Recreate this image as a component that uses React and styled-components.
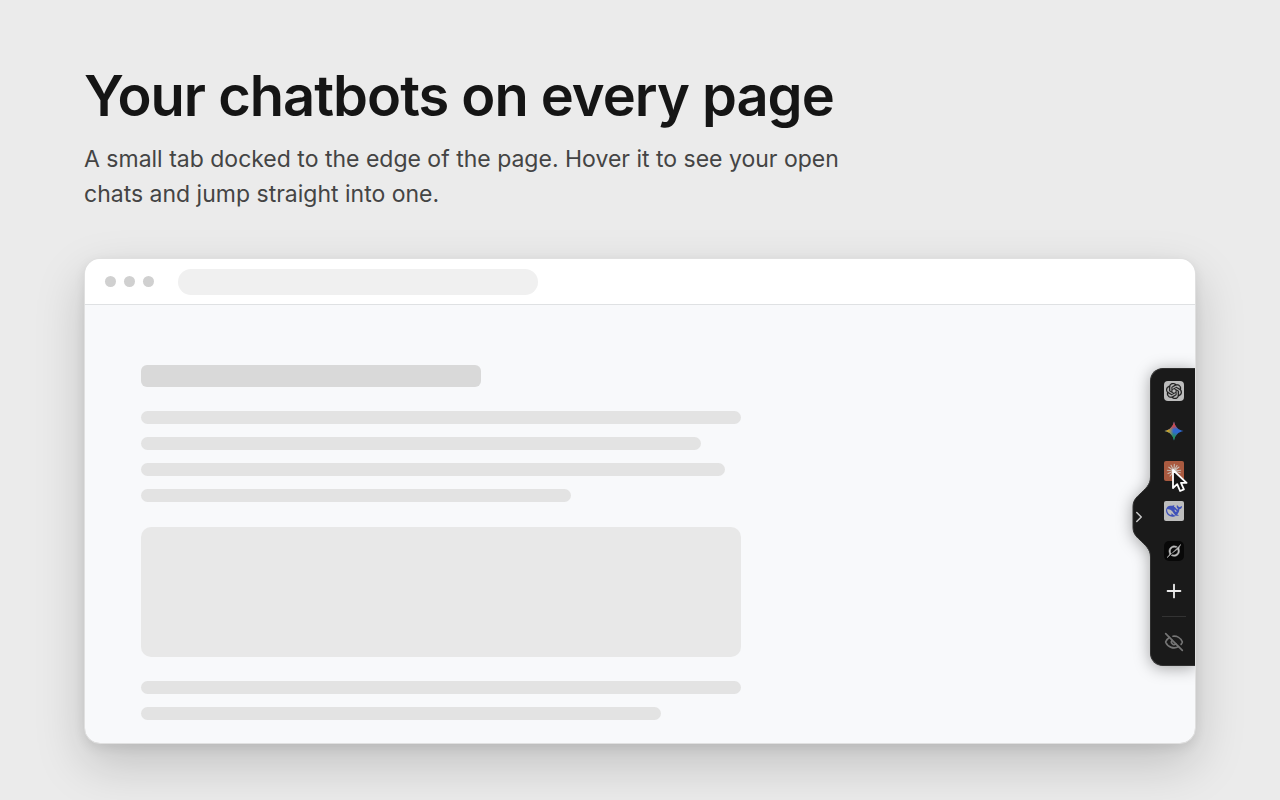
import React from 'react';
import styled, { createGlobalStyle } from 'styled-components';
import { SiOpenai } from 'react-icons/si';
import { Plus, ChevronRight, EyeOff } from 'lucide-react';

const GlobalStyle = createGlobalStyle`
  *, *::before, *::after { box-sizing: border-box; }
  body {
    margin: 0;
    background: #ebebeb;
    color: #151515;
    font-family: Inter, 'Liberation Sans', sans-serif;
  }
`;

const Page = styled.main`
  min-height: 100vh;
  padding: 64px 84px 56px;
  overflow: hidden;
`;

const Intro = styled.header`
  max-width: 800px;
  margin-bottom: 46px;
`;

const Title = styled.h1`
  margin: 0 0 14px;
  font-size: 56px;
  line-height: 64px;
  font-weight: 600;
  letter-spacing: -1px;
`;

const Lead = styled.p`
  margin: 0;
  color: #444;
  font-size: 23px;
  line-height: 35px;
`;

const Browser = styled.section`
  position: relative;
  border: 1px solid #e0e0e0;
  border-radius: 16px;
  background: #f8f9fb;
  background-clip: padding-box;
  overflow: hidden;
  box-shadow: 0 20px 50px rgba(0, 0, 0, 0.18), 0 4px 12px rgba(0, 0, 0, 0.08);
`;

const Chrome = styled.div`
  display: flex;
  align-items: center;
  height: 46px;
  padding: 0 20px;
  background: #fff;
  border-bottom: 1px solid #dfe1e3;
`;

const Lights = styled.div`
  display: flex;
  gap: 8px;
  margin-right: 24px;
`;

const Light = styled.span`
  width: 11px;
  height: 11px;
  border-radius: 50%;
  background: #d0d0d0;
`;

const Address = styled.div`
  width: 360px;
  height: 26px;
  border-radius: 13px;
  background: #f0f0f0;
`;

const Document = styled.div`
  display: flex;
  flex-direction: column;
  gap: 24px;
  padding: 60px 56px 22px;
`;

const Paragraph = styled.div`
  display: flex;
  flex-direction: column;
  gap: 13px;
  padding-bottom: 1px;
`;

const Bar = styled.div`
  width: ${(p) => p.$width}px;
  max-width: 100%;
  height: 13px;
  border-radius: 7px;
  background: #e3e3e3;
`;

const HeadingBar = styled(Bar)`
  height: 22px;
  border-radius: 6px;
  background: #d9d9d9;
`;

const Figure = styled(Bar)`
  height: 130px;
  border-radius: 10px;
  background: #e8e8e8;
`;

const Dock = styled.nav`
  position: absolute;
  top: 109px;
  right: 0;
  display: flex;
  flex-direction: column;
  align-items: center;
  gap: 8px;
  padding: 6px 5px 7px 7px;
  background: #1a1a1a;
  border: 1px solid #303030;
  border-right: 0;
  border-radius: 13px 0 0 13px;
  filter: drop-shadow(0 2px 8px rgba(0, 0, 0, 0.35));
`;

const DockButton = styled.button`
  display: grid;
  place-items: center;
  width: 32px;
  height: 32px;
  padding: 0;
  border: 0;
  background: none;
  color: ${(p) => p.$color || '#ececec'};
`;

const Tile = styled.span`
  display: grid;
  place-items: center;
  width: 20px;
  height: 20px;
  border-radius: ${(p) => p.$radius || 4}px;
  background: ${(p) => p.$fill};
  color: ${(p) => p.$ink};
`;

const Divider = styled.hr`
  width: 24px;
  height: 1px;
  margin: 1px 0;
  border: 0;
  background: #333;
`;

const Handle = styled.button`
  position: absolute;
  top: 108px;
  left: -19px;
  width: 20px;
  height: 80px;
  padding: 0;
  border: 0;
  background: none;
  color: #c8c8c8;
`;

const HandleShape = styled.svg`
  display: block;
`;

const HandleArrow = styled(ChevronRight)`
  position: absolute;
  top: 31px;
  left: -2px;
`;

const Pointer = styled.svg`
  position: absolute;
  top: 99px;
  right: 6px;
  pointer-events: none;
`;

const GeminiIcon = () => (
  <svg width="20" height="20" viewBox="0 0 20 20" aria-hidden="true">
    <defs>
      <linearGradient id="gemRed" x1="9" y1="0" x2="10.500" y2="10" gradientUnits="userSpaceOnUse">
        <stop offset="0.5" stopColor="#d0484a" />
        <stop offset="0.85" stopColor="#d0484a" stopOpacity="0" />
      </linearGradient>
      <linearGradient id="gemYellow" x1="0" y1="9.500" x2="10" y2="10.500" gradientUnits="userSpaceOnUse">
        <stop offset="0.45" stopColor="#c9a227" />
        <stop offset="0.95" stopColor="#c9a227" stopOpacity="0" />
      </linearGradient>
      <linearGradient id="gemGreen" x1="8" y1="20" x2="10.500" y2="10" gradientUnits="userSpaceOnUse">
        <stop offset="0.4" stopColor="#23934c" />
        <stop offset="0.9" stopColor="#23934c" stopOpacity="0" />
      </linearGradient>
      <path
        id="gemStar"
        d="M10 .5C11.200 6 14 8.800 19.500 10 14 11.200 11.200 14 10 19.500 8.800 14 6 11.200 .5 10 6 8.800 8.800 6 10 .5Z"
      />
    </defs>
    <use href="#gemStar" fill="#2f69cf" />
    <use href="#gemStar" fill="url(#gemGreen)" />
    <use href="#gemStar" fill="url(#gemYellow)" />
    <use href="#gemStar" fill="url(#gemRed)" />
  </svg>
);

const ClaudeIcon = () => (
  <svg width="16" height="16" viewBox="0 0 16 16" aria-hidden="true">
    <path
      d="M8 8 8.300 1.400M8 8l3-5.500M8 8l5-4M8 8l6.600-.8M8 8l6.300 1.800M8 8l4.500 4.300M8 8l2 6M8 8l-1.200 6.600M8 8l-4 5M8 8l-6 2.500M8 8l-6.600-.7M8 8 2.800 4.200M8 8 5 2.200"
      stroke="currentColor"
      strokeWidth="1.100"
      strokeLinecap="round"
      fill="none"
    />
  </svg>
);

const DeepSeekIcon = () => (
  <svg width="16" height="16" viewBox="0 0 24 24" fill="currentColor" aria-hidden="true">
    <path d="M23.748 4.482c-.254-.124-.364.113-.512.234-.051.039-.094.09-.137.136-.372.397-.806.657-1.373.626-.829-.046-1.537.214-2.163.848-.133-.782-.575-1.248-1.247-1.548-.352-.156-.708-.311-.955-.65-.172-.241-.219-.51-.305-.774-.055-.16-.11-.323-.293-.35-.2-.031-.278.136-.356.276-.313.572-.434 1.202-.422 1.84.027 1.436.633 2.58 1.838 3.393.137.093.172.187.129.323-.082.28-.18.552-.266.833-.055.179-.137.217-.329.14a5.526 5.526 0 0 1-1.736-1.18c-.857-.828-1.631-1.742-2.597-2.458a11.365 11.365 0 0 0-.689-.471c-.985-.957.13-1.743.388-1.836.27-.098.093-.432-.779-.428-.872.004-1.67.295-2.687.684a3.055 3.055 0 0 1-.465.137 9.597 9.597 0 0 0-2.883-.102c-1.885.21-3.39 1.102-4.497 2.623C.082 8.606-.231 10.684.152 12.85c.403 2.284 1.569 4.175 3.36 5.653 1.858 1.533 3.997 2.284 6.438 2.14 1.482-.085 3.133-.284 4.994-1.86.47.234.962.327 1.78.397.63.059 1.236-.03 1.705-.128.735-.156.684-.837.419-.961-2.155-1.004-1.682-.595-2.113-.926 1.096-1.296 2.746-2.642 3.392-7.003.05-.347.007-.565 0-.845-.004-.17.035-.237.23-.256a4.173 4.173 0 0 0 1.545-.475c1.396-.763 1.96-2.015 2.093-3.517.02-.23-.004-.467-.247-.588zM11.581 18c-2.089-1.642-3.102-2.183-3.52-2.16-.392.024-.321.471-.235.763.09.288.207.486.371.739.114.167.192.416-.113.603-.673.416-1.842-.14-1.897-.167-1.361-.802-2.5-1.86-3.301-3.307-.774-1.393-1.224-2.887-1.298-4.482-.02-.386.093-.522.477-.592a4.696 4.696 0 0 1 1.529-.039c2.132.312 3.946 1.265 5.468 2.774.868.86 1.525 1.887 2.202 2.891.72 1.066 1.494 2.082 2.48 2.914.348.292.625.514.891.677-.802.09-2.14.11-3.054-.614zm1-6.44a.306.306 0 0 1 .415-.287.302.302 0 0 1 .2.288.306.306 0 0 1-.31.307.303.303 0 0 1-.304-.308zm3.11 1.596c-.2.081-.399.151-.59.16a1.245 1.245 0 0 1-.798-.254c-.274-.23-.47-.358-.552-.758a1.73 1.73 0 0 1 .016-.588c.07-.327-.008-.537-.239-.727-.187-.156-.426-.199-.688-.199a.559.559 0 0 1-.254-.078c-.11-.054-.2-.19-.114-.358.028-.054.16-.186.192-.21.356-.202.767-.136 1.146.016.352.144.618.408 1.001.782.391.451.462.576.685.914.176.265.336.537.445.848.067.195-.019.354-.25.452z" />
  </svg>
);

const GrokIcon = () => (
  <svg
    width="14"
    height="14"
    viewBox="0 0 24 24"
    fill="currentColor"
    stroke="currentColor"
    strokeWidth="0.900"
    aria-hidden="true"
  >
    <path d="M9.270 15.290l7.978-5.897c.391-.29.95-.177 1.137.272.98 2.369.542 5.215-1.41 7.169-1.951 1.954-4.667 2.382-7.149 1.406l-2.711 1.257c3.889 2.661 8.611 2.003 11.562-.953 2.341-2.344 3.066-5.539 2.388-8.42l.006.007c-.983-4.232.242-5.924 2.75-9.383.06-.082.12-.164.179-.248l-3.301 3.305v-.01L9.267 15.292M7.623 16.723c-2.792-2.67-2.31-6.801.071-9.184 1.761-1.763 4.647-2.483 7.166-1.425l2.705-1.25a7.808 7.808 0 0 0-1.829-1A8.975 8.975 0 0 0 5.984 5.83c-2.533 2.536-3.33 6.436-1.962 9.764 1.022 2.487-.653 4.246-2.34 6.022-.599.63-1.199 1.259-1.682 1.925l7.62-6.815" />
  </svg>
);

const bots = [
  {
    name: 'ChatGPT',
    fill: '#bdbdbd',
    ink: '#1f1f1f',
    icon: <SiOpenai size={16} stroke="currentColor" strokeWidth="0.4" />,
  },
  { name: 'Gemini', fill: 'transparent', icon: <GeminiIcon /> },
  { name: 'Claude', fill: '#a95a40', ink: '#c9bdb5', radius: 2, icon: <ClaudeIcon /> },
  { name: 'DeepSeek', fill: '#bdbdbd', ink: '#3f51b9', radius: 2, icon: <DeepSeekIcon /> },
  { name: 'Grok', fill: '#080808', ink: '#bdbdbd', radius: 5, icon: <GrokIcon /> },
];

const ChatDock = () => (
  <Dock aria-label="Open chats">
    <Handle type="button" aria-label="Collapse dock">
      <HandleShape width="20" height="80" viewBox="0 0 20 80" aria-hidden="true">
        <path
          d="M20 0H18.500C18.500 8 13 12 8 17 3.500 21 1 24 1 30V50C1 56 3.500 59 8 63 13 68 18.500 72 18.500 80H20Z"
          fill="#1a1a1a"
        />
        <path
          d="M18.500 0C18.500 8 13 12 8 17 3.500 21 1 24 1 30V50C1 56 3.500 59 8 63 13 68 18.500 72 18.500 80"
          fill="none"
          stroke="#303030"
        />
      </HandleShape>
      <HandleArrow size={18} strokeWidth={2} />
    </Handle>
    {bots.map((bot) => (
      <DockButton type="button" key={bot.name} aria-label={bot.name}>
        <Tile $fill={bot.fill} $ink={bot.ink} $radius={bot.radius}>
          {bot.icon}
        </Tile>
      </DockButton>
    ))}
    <DockButton type="button" aria-label="Add chat">
      <Plus size={22} strokeWidth={2} />
    </DockButton>
    <Divider />
    <DockButton type="button" aria-label="Hide dock" $color="#757575">
      <EyeOff size={20} strokeWidth={2} />
    </DockButton>
    <Pointer width="18" height="26" viewBox="0 0 18 26" aria-hidden="true">
      <path
        d="M2 2V20L6.200 16.200 9.100 23 12.900 21.400 10 14.800H15.600Z"
        fill="#151515"
        stroke="#fff"
        strokeWidth="1.800"
        strokeLinejoin="round"
      />
    </Pointer>
  </Dock>
);

export default function App() {
  return (
    <>
      <GlobalStyle />
      <Page>
        <Intro>
          <Title>Your chatbots on every page</Title>
          <Lead>
            A small tab docked to the edge of the page. Hover it to see your open chats and jump
            straight into one.
          </Lead>
        </Intro>
        <Browser>
          <Chrome>
            <Lights>
              <Light />
              <Light />
              <Light />
            </Lights>
            <Address />
          </Chrome>
          <Document>
            <HeadingBar $width={340} />
            <Paragraph>
              <Bar $width={600} />
              <Bar $width={560} />
              <Bar $width={584} />
              <Bar $width={430} />
            </Paragraph>
            <Figure $width={600} />
            <Paragraph>
              <Bar $width={600} />
              <Bar $width={520} />
            </Paragraph>
          </Document>
          <ChatDock />
        </Browser>
      </Page>
    </>
  );
}
